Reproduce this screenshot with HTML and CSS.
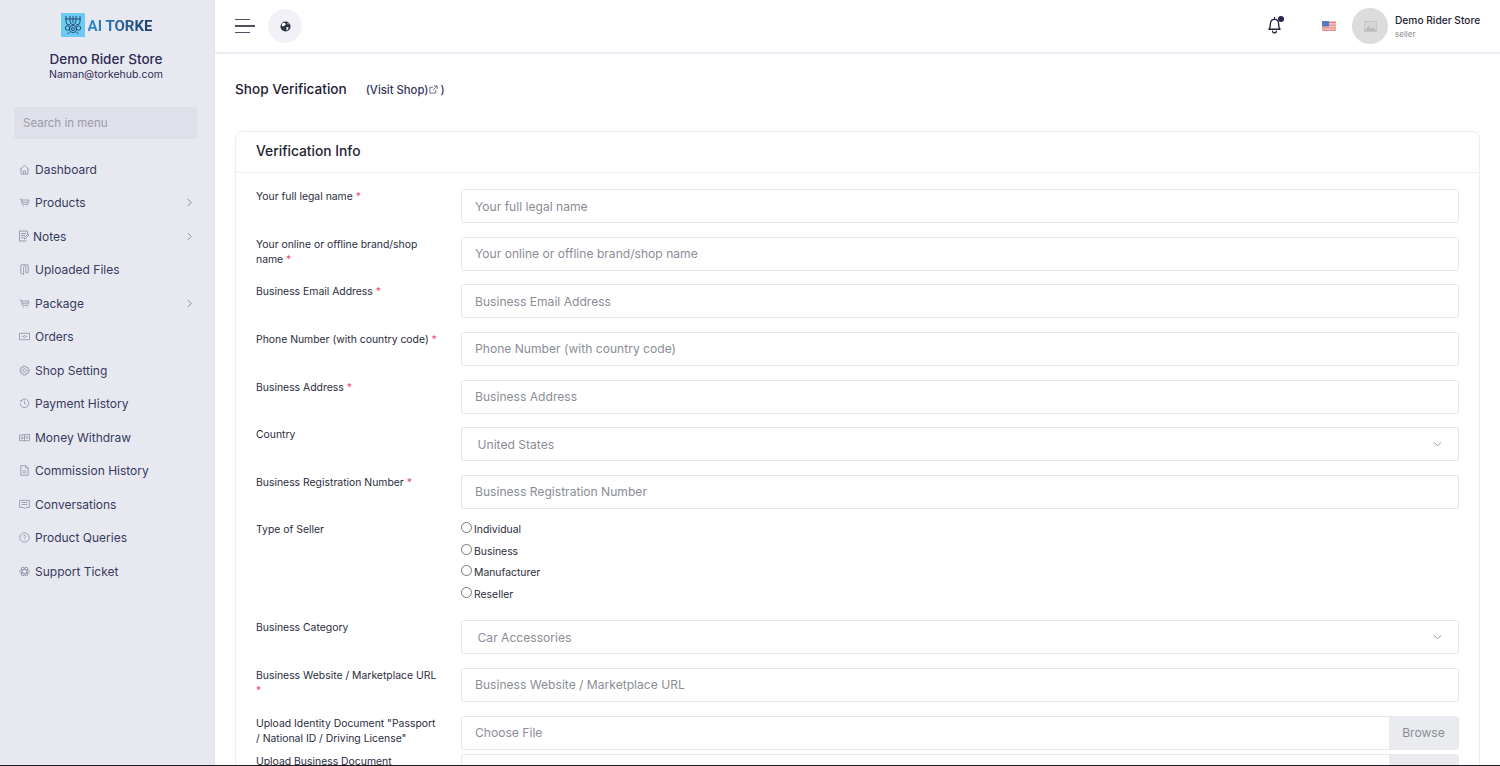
FILE: index.html
```html
<!DOCTYPE html>
<html lang="en">
<head>
<meta charset="utf-8">
<title>Shop Verification</title>
<link rel="stylesheet" href="styles.css">
</head>
<body>
<div class="app">
  <aside class="sidebar">
    <div class="brand">
      <div class="logo">
        <svg class="logo-mark" viewBox="0 0 24 24" aria-hidden="true">
          <rect width="24" height="24" fill="#6ccbf5"/>
          <g fill="none" stroke="#1f3f62" stroke-width=".9">
            <path d="M5 3v6M9 3v5M12 3v7M15 3v5M19 3v6M5 9q0 3 4 3M19 9q0 3-4 3M9 8q0 3 3 4M15 8q0 3-3 4"/>
            <circle cx="12" cy="16" r="3.6"/><circle cx="12" cy="16" r="1.5"/>
            <circle cx="6.5" cy="15" r="2.2"/><circle cx="17.5" cy="15" r="2.2"/>
            <path d="M4 6h16M8.500 19.500l-2 1M15.500 19.500l2 1"/>
          </g>
        </svg>
        <span class="logo-text">AI TORKE</span>
      </div>
      <div class="store-name">Demo Rider Store</div>
      <div class="store-mail">Naman@torkehub.com</div>
    </div>
    <div class="menu-search">Search in menu</div>
    <nav class="nav">
      <a class="nav-item"><svg class="ico" viewBox="0 0 12 12"><path d="M.8 6.200 6 1.500l5.200 4.700M2.300 5v6h7.400V5M4.800 11V7.500h2.400V11"/></svg><span>Dashboard</span></a>
      <a class="nav-item"><svg class="ico" viewBox="0 0 12 12"><path d="M.8 2.300h1.700L3.600 8h5.800l1.600-4.700H2.800M3.200 5.600h7M4.200 10h1M8 10h1"/></svg><span>Products</span><svg class="caret" viewBox="0 0 8 10"><path d="m2 1 4 4-4 4"/></svg></a>
      <a class="nav-item notes"><svg class="ico ico-lg" viewBox="0 0 12 12"><path d="M9.500 4V1h-8v10h7M3 3.500h5M3 5.500h4M3 7.500h2.500M6 9l.5-1.500L10 4l1 1-3.500 3.500z"/></svg><span>Notes</span><svg class="caret" viewBox="0 0 8 10"><path d="m2 1 4 4-4 4"/></svg></a>
      <a class="nav-item"><svg class="ico" viewBox="0 0 12 12"><path d="M2 1h8v8.500H7.500V3L5 1M2 1v9l3 1.500V3"/></svg><span>Uploaded Files</span></a>
      <a class="nav-item"><svg class="ico" viewBox="0 0 12 12"><path d="M.8 2.300h1.700L3.600 8h5.800l1.600-4.700H2.800M3.200 5.600h7M4.200 10h1M8 10h1"/></svg><span>Package</span><svg class="caret" viewBox="0 0 8 10"><path d="m2 1 4 4-4 4"/></svg></a>
      <a class="nav-item"><svg class="ico" viewBox="0 0 12 12"><path d="M.5 2.500h11v7H.5zM3 6h1M8 6h1"/><circle cx="6" cy="6" r="1.100"/></svg><span>Orders</span></a>
      <a class="nav-item"><svg class="ico" viewBox="0 0 12 12"><path d="m6 1.300 4 2.350v4.700L6 10.700l-4-2.350v-4.700z"/><circle cx="6" cy="6" r="1.800"/><circle cx="6" cy="6" r="5.100" stroke-dasharray="1.300 1.400"/></svg><span>Shop Setting</span></a>
      <a class="nav-item"><svg class="ico" viewBox="0 0 12 12"><path d="M2.200 3a4.700 4.700 0 1 1-.9 3M1 2.200l1.200 1.600 1.600-.8M6 3.200V6l1.900 1.100"/></svg><span>Payment History</span></a>
      <a class="nav-item"><svg class="ico" viewBox="0 0 12 12"><path d="M.5 3.500 11.500 2.500v7H.5zM6 3v6.500"/><circle cx="3.300" cy="6.500" r="1.100"/><circle cx="8.700" cy="6" r="1.100"/></svg><span>Money Withdraw</span></a>
      <a class="nav-item"><svg class="ico" viewBox="0 0 12 12"><path d="M2 .8h5.500L10 3.300v7.900H2zM7.500 .8v2.500H10M4 6.500h4M4 8.500h4"/></svg><span>Commission History</span></a>
      <a class="nav-item"><svg class="ico" viewBox="0 0 12 12"><path d="M.7 1.500h10.600v7.700H7.200L6 10.700 4.800 9.200H.7zM3 3.800h6M3 6h6"/></svg><span>Conversations</span></a>
      <a class="nav-item"><svg class="ico" viewBox="0 0 12 12"><circle cx="6" cy="6" r="5.100"/><path d="M4.700 4.800a1.300 1.300 0 1 1 1.900 1.200c-.5.300-.6.500-.6 1M6 8.200v.6"/></svg><span>Product Queries</span></a>
      <a class="nav-item"><svg class="ico" viewBox="0 0 12 12"><ellipse cx="6" cy="6" rx="5.300" ry="2.200"/><ellipse cx="6" cy="6" rx="5.300" ry="2.200" transform="rotate(60 6 6)"/><ellipse cx="6" cy="6" rx="5.300" ry="2.200" transform="rotate(120 6 6)"/></svg><span>Support Ticket</span></a>
    </nav>
  </aside>

  <div class="main">
    <header class="topbar">
      <div class="burger"><i class="b-short"></i><i class="b-long"></i><i class="b-short"></i></div>
      <div class="globe">
        <svg viewBox="0 0 12 12" width="11" height="11"><circle cx="6" cy="6" r="5.500" fill="#2d3142"/><path d="M2.500 2.500 5 2l1.500 1.500L5 5 3.500 6 1.800 4.800zM7 6.500l2.500.2L8.500 9.500 7 10zM8 1.800l1.800 1.500-1.300.4z" fill="#fff"/></svg>
      </div>
      <div class="spacer"></div>
      <div class="bell">
        <svg viewBox="0 0 16 18" width="15" height="18"><path d="M2 13.500c1.300-1 1.600-2.500 1.600-5.500 0-3 1.800-5 4.400-5s4.400 2 4.400 5c0 3 .3 4.500 1.600 5.500zM6 15.500a2 2 0 0 0 4 0M8 1v2" fill="none" stroke="#20233a" stroke-width="1.400" stroke-linecap="round" stroke-linejoin="round"/></svg>
        <i class="bell-dot"></i>
      </div>
      <svg class="flag" viewBox="0 0 14 10"><rect width="14" height="10" fill="#f3c6c4"/><path d="M0 1.500h14M0 4.200h14M0 6.900h14M0 9.200h14" stroke="#e2827e" stroke-width="1"/><rect width="7" height="5.500" fill="#5b78c4"/></svg>
      <div class="avatar">
        <svg viewBox="0 0 14 12" width="13" height="11"><rect width="14" height="12" fill="#c6c6c6"/><rect x="1" y="1" width="12" height="10" fill="#d6d6d6"/><path d="M1 10 5 5.500 8 8.500 10 7l3 3v1H1z" fill="#bcbcbc"/></svg>
      </div>
      <div class="user">
        <div class="user-name">Demo Rider Store</div>
        <div class="user-role">seller</div>
      </div>
    </header>

    <main class="content">
      <div class="page-head">
        <h1 class="page-title">Shop Verification</h1>
        <a class="visit">(Visit Shop)<svg viewBox="0 0 10 10" width="9" height="9"><path d="M7.500 5.500V9H1V2.500h3.500M5.500 1H9v3.500M9 1 4.500 5.500" fill="none" stroke="#4f5272" stroke-width=".9"/></svg>)</a>
      </div>

      <section class="card">
        <h2 class="card-head">Verification Info</h2>
        <form class="card-body">
          <div class="row"><label class="lbl">Your full legal name <b>*</b></label><input class="ctl" placeholder="Your full legal name"></div>
          <div class="row"><label class="lbl">Your online or offline brand/shop<br>name <b>*</b></label><input class="ctl" placeholder="Your online or offline brand/shop name"></div>
          <div class="row"><label class="lbl">Business Email Address <b>*</b></label><input class="ctl" placeholder="Business Email Address"></div>
          <div class="row"><label class="lbl">Phone Number (with country code) <b>*</b></label><input class="ctl" placeholder="Phone Number (with country code)"></div>
          <div class="row"><label class="lbl">Business Address <b>*</b></label><input class="ctl" placeholder="Business Address"></div>
          <div class="row"><label class="lbl">Country</label><div class="ctl sel"><span>United States</span><svg viewBox="0 0 10 6" width="9" height="6"><path d="m1 1 4 4 4-4" fill="none" stroke="#8a8c94"/></svg></div></div>
          <div class="row"><label class="lbl">Business Registration Number <b>*</b></label><input class="ctl" placeholder="Business Registration Number"></div>
          <div class="row"><label class="lbl">Type of Seller</label>
            <div class="radios">
              <label class="radio"><input type="radio" name="t">Individual</label>
              <label class="radio"><input type="radio" name="t">Business</label>
              <label class="radio"><input type="radio" name="t">Manufacturer</label>
              <label class="radio"><input type="radio" name="t">Reseller</label>
            </div>
          </div>
          <div class="row"><label class="lbl">Business Category</label><div class="ctl sel"><span>Car Accessories</span><svg viewBox="0 0 10 6" width="9" height="6"><path d="m1 1 4 4 4-4" fill="none" stroke="#8a8c94"/></svg></div></div>
          <div class="row"><label class="lbl">Business Website / Marketplace URL<br><b>*</b></label><input class="ctl" placeholder="Business Website / Marketplace URL"></div>
          <div class="row row-file"><label class="lbl">Upload Identity Document "Passport<br>/ National ID / Driving License"</label><div class="ctl file"><span>Choose File</span><em>Browse</em></div></div>
          <div class="row row-file"><label class="lbl">Upload Business Document</label><div class="ctl file"><span>Choose File</span><em>Browse</em></div></div>
        </form>
      </section>
    </main>
  </div>
</div>
<div class="edge"></div>
</body>
</html>
```
FILE: styles.css
```css
* { box-sizing: border-box; }
html, body { margin: 0; height: 766px; overflow: hidden; }
body {
  display: flex;
  flex-direction: column;
  font-family: Inter, "Noto Sans", sans-serif;
  background: #fff;
  color: #1f2233;
}
.app { flex: 1; min-height: 0; display: flex; overflow: hidden; }
.edge { height: 1px; flex: none; background: #1d1d22; }

.sidebar {
  width: 215px;
  flex: none;
  background: #e8e9f0;
  border-right: 1px solid #e2e4ec;
  padding: 13px 17px 0 14px;
}
.brand { display: flex; flex-direction: column; align-items: center; padding-left: 1px; }
.logo { display: flex; align-items: center; gap: 3px; height: 24px; margin-left: 1px; }
.logo-mark { width: 24px; height: 24px; }
.logo-text {
  font-family: Roboto, sans-serif;
  font-weight: 700;
  font-size: 15px;
  margin-top: 2px;
  background: linear-gradient(90deg, #2f8bcb, #1c3f6e);
  -webkit-background-clip: text;
  background-clip: text;
  color: transparent;
}
.store-name { margin-top: 13px; font-size: 13.500px; line-height: 18px; font-weight: 500; color: #2d2b55; }
.store-mail { font-size: 10.500px; line-height: 14px; color: #2d2b55; }
.menu-search {
  margin-top: 25px;
  height: 32px;
  background: #dfe0e9;
  border-radius: 3px;
  padding-left: 9px;
  display: flex;
  align-items: center;
  font-size: 11.500px;
  color: #9b9ca8;
}
.nav { margin-top: 13.500px; display: flex; flex-direction: column; }
.nav-item {
  height: 33.500px;
  display: flex;
  align-items: center;
  padding-left: 5px;
  font-size: 12px;
  color: #363a5e;
}
.nav-item span { flex: 1; margin-left: 5px; }
.ico { width: 11px; height: 11px; flex: none; fill: none; stroke: #8f91a6; stroke-width: .9; }
.notes { padding-left: 4px; }
.ico-lg { width: 12px; height: 12px; }
.notes span { margin-left: 3px; }
.caret { width: 7px; height: 9px; flex: none; margin-right: 4px; fill: none; stroke: #7c7f92; stroke-width: 1; }

.main { flex: 1; min-width: 0; display: flex; flex-direction: column; }
.topbar {
  height: 54px;
  flex: none;
  display: flex;
  align-items: center;
  padding: 0 20px;
  border-bottom: 2px solid #e9edf5;
}
.burger { width: 20px; display: flex; flex-direction: column; gap: 5px; }
.burger i { display: block; height: 1.500px; background: #4f5262; }
.b-short { width: 15px; }
.b-long { width: 20px; }
.globe {
  width: 34px; height: 34px; margin-left: 13px;
  border-radius: 50%;
  background: #f1f1f7;
  display: flex; align-items: center; justify-content: center;
}
.spacer { flex: 1; }
.bell { position: relative; width: 15px; height: 20px; display: flex; align-items: flex-start; }
.bell-dot {
  position: absolute; top: 0; right: -2px;
  width: 6px; height: 6px; border-radius: 50%;
  background: #27264f;
}
.flag { width: 14px; height: 10px; margin-left: 40px; }
.avatar {
  width: 36px; height: 36px; margin-left: 16px;
  border-radius: 50%;
  background: #dcdcdc;
  display: flex; align-items: center; justify-content: center;
}
.user { margin-left: 7px; width: 85px; padding-top: 1px; }
.user-name { font-size: 10.200px; line-height: 13px; font-weight: 500; color: #1f2233; white-space: nowrap; }
.user-role { font-size: 8px; line-height: 11px; margin-top: 2px; color: #8a8c94; }

.content { flex: 1; min-height: 0; padding: 25px 20px 0; }
.page-head { display: flex; align-items: center; height: 20px; margin-bottom: 32px; }
.page-title { margin: 0; font-size: 13.600px; font-weight: 500; color: #1f2233; }
.visit { margin-left: 19px; padding-top: 1px; font-size: 11.300px; color: #33365a; display: flex; align-items: center; font-weight: 500; }
.visit svg { margin: 0 2px 0 1px; }

.card { border: 1px solid #ebedf3; border-radius: 8px; }
.card-head {
  margin: 0;
  height: 41px;
  padding: 0 0 3px 20px;
  display: flex;
  align-items: center;
  font-size: 13.800px;
  font-weight: 500;
  color: #1f2233;
  border-bottom: 1px solid #eff0f5;
}
.card-body { padding: 16.200px 20px 0; }
.row { display: grid; grid-template-columns: 205px 1fr; margin-bottom: 13.600px; }
.row-file { margin-bottom: 4px; }
.lbl { font-size: 10.400px; line-height: 15px; color: #2a2d3e; white-space: nowrap; }
.lbl b { color: #ef4a6b; font-weight: 400; }
.ctl {
  height: 34px;
  width: 100%;
  border: 1px solid #e6e7ee;
  border-radius: 3px;
  padding: 0 13px;
  font: 400 12.100px Inter, "Noto Sans", sans-serif;
  color: #8b8d96;
  background: #fff;
  display: flex;
  align-items: center;
}
.ctl::placeholder { color: #8b8d96; opacity: 1; }
.sel { padding: 0 16px 0 15.500px; justify-content: space-between; }
.file { padding: 0 0 0 13px; justify-content: space-between; overflow: hidden; }
.file em {
  font-style: normal;
  width: 69px;
  align-self: stretch;
  background: #e9ebee;
  display: flex;
  align-items: center;
  justify-content: center;
}
.radios { display: flex; flex-direction: column; height: 84.400px; }
.radio {
  height: 21.400px;
  flex: none;
  display: flex;
  align-items: flex-start;
  gap: 2px;
  font-size: 10.400px;
  line-height: 16px;
  color: #2a2d3e;
}
.radio input { width: 11px; height: 11px; margin: 0; accent-color: #555; }
```
